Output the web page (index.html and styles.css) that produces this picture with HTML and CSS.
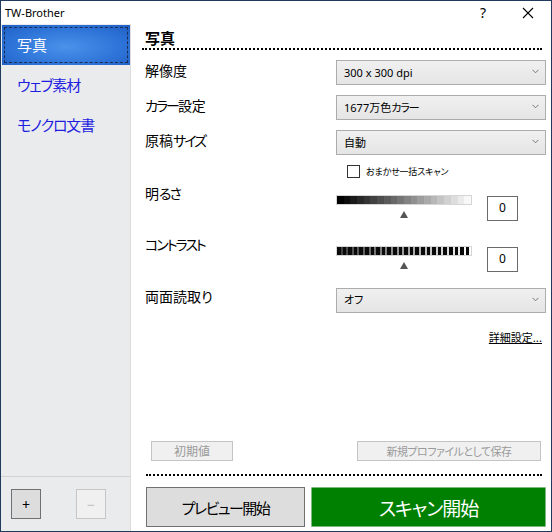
FILE: index.html
```html
<!DOCTYPE html>
<html lang="ja">
<head>
<meta charset="utf-8">
<title>TW-Brother</title>
<link rel="stylesheet" href="styles.css">
</head>
<body>
<div class="window">
  <div class="titlebar">
    <span class="title">TW-Brother</span>
    <span class="help">?</span>
    <span class="close"><svg width="12" height="12" viewBox="0 0 12 12"><path d="M1 1 L11 11 M11 1 L1 11" stroke="#000" stroke-width="1.1" fill="none"/></svg></span>
  </div>
  <div class="content">
    <aside class="sidebar">
      <ul class="profiles">
        <li class="profile selected"><span class="focus">写真</span></li>
        <li class="profile">ウェブ素材</li>
        <li class="profile">モノクロ文書</li>
      </ul>
      <div class="sidebar-tools">
        <button class="tool">+</button>
        <button class="tool disabled">−</button>
      </div>
    </aside>
    <main class="panel">
      <h1 class="heading">写真</h1>
      <div class="settings">
        <div class="row">
          <div class="label">解像度</div>
          <div class="select"><span>300 x 300 dpi</span><svg class="chev" width="7" height="5" viewBox="0 0 7 5"><path d="M0.5 0.8 L3.5 3.8 L6.5 0.8" stroke="#777" fill="none"/></svg></div>
        </div>
        <div class="row">
          <div class="label"><span class="kana">カラー</span>設定</div>
          <div class="select"><span>1677万色<span class="kana-s">カラー</span></span><svg class="chev" width="7" height="5" viewBox="0 0 7 5"><path d="M0.5 0.8 L3.5 3.8 L6.5 0.8" stroke="#777" fill="none"/></svg></div>
        </div>
        <div class="row">
          <div class="label">原稿<span class="kana">サイズ</span></div>
          <div class="select"><span>自動</span><svg class="chev" width="7" height="5" viewBox="0 0 7 5"><path d="M0.5 0.8 L3.5 3.8 L6.5 0.8" stroke="#777" fill="none"/></svg></div>
        </div>
        <div class="check-row">
          <span class="checkbox"></span><span class="check-label">おまかせ一括スキャン</span>
        </div>
        <div class="row slider-row bright">
          <div class="label">明<span class="kana">るさ</span></div>
          <div class="slider-ctrl">
            <div class="slider">
              <div class="bar bar-bright"></div>
              <div class="thumb"></div>
            </div>
            <div class="numbox">0</div>
          </div>
        </div>
        <div class="row slider-row contrast">
          <div class="label"><span class="kana">コントラスト</span></div>
          <div class="slider-ctrl">
            <div class="slider">
              <div class="bar bar-contrast"></div>
              <div class="thumb"></div>
            </div>
            <div class="numbox">0</div>
          </div>
        </div>
        <div class="row duplex">
          <div class="label">両面読取<span class="kana">り</span></div>
          <div class="select"><span>オフ</span><svg class="chev" width="7" height="5" viewBox="0 0 7 5"><path d="M0.5 0.8 L3.5 3.8 L6.5 0.8" stroke="#777" fill="none"/></svg></div>
        </div>
      </div>
      <div class="link-row"><a class="detail-link">詳細設定...</a></div>
      <div class="spacer"></div>
      <div class="profile-actions">
        <button class="btn-small default-btn">初期値</button>
        <button class="btn-small save-btn">新規プロファイルとして保存</button>
      </div>
      <div class="divider"></div>
      <div class="actions">
        <button class="btn-preview">プレビュー開始</button>
        <button class="btn-scan">スキャン開始</button>
      </div>
    </main>
  </div>
</div>
</body>
</html>
```

FILE: styles.css
```css
* { box-sizing: border-box; }
html, body { margin: 0; padding: 0; background: #fff; }
body {
  font-family: "Noto Sans", "Noto Sans CJK JP", sans-serif;
  font-feature-settings: "palt";
  color: #000;
}
button { font-feature-settings: "palt"; }
.window {
  width: 552px;
  height: 532px;
  border: 1px solid #1e3b5e;
  display: flex;
  flex-direction: column;
  background: #fff;
}
.titlebar {
  height: 23px;
  display: flex;
  align-items: center;
  background: #fff;
  font-size: 11px;
  line-height: 16px;
}
.title { padding-left: 4px; flex: 1; }
.help { width: 14px; margin-right: 28px; font-size: 14px; }
.close { width: 12px; height: 12px; margin-right: 17px; display: flex; }
.content {
  flex: 1;
  display: flex;
  min-height: 0;
}
.sidebar {
  width: 130px;
  background: #eaebed;
  border-right: 1px solid #dcdcdc;
  display: flex;
  flex-direction: column;
}
.profiles {
  list-style: none;
  margin: 0;
  padding: 1px 0 0 0;
  flex: 1;
  font-family: "Noto Sans CJK JP", sans-serif;
  font-size: 15px;
  letter-spacing: -1.2px;
}
.profile {
  height: 40px;
  line-height: 40px;
  padding-left: 16px;
  color: #1e1ee0;
}
.profile.selected {
  margin: 0 0 0 1px;
  width: 128px;
  padding: 2px;
  background: radial-gradient(ellipse at 50% 55%, #4a92ea 0%, #2e74d8 60%, #1f5fc4 100%);
  color: #fff;
  letter-spacing: 0;
}
.focus {
  display: block;
  height: 36px;
  line-height: 34px;
  border: 1px dashed #1a2d55;
  padding-left: 12px;
}
.sidebar-tools {
  height: 55px;
  border-top: 1px solid #d2d2d2;
  display: flex;
  align-items: flex-start;
  padding: 12px 0 0 10px;
  gap: 35px;
}
.tool {
  width: 30px;
  height: 30px;
  border: 1px solid #707070;
  background: #dddddd;
  font-family: "Noto Sans", sans-serif;
  font-size: 14px;
  padding: 0;
  color: #000;
}
.tool.disabled {
  border-color: #c6c6c6;
  background: #f0f0f0;
  color: #c0c0c0;
}
.panel {
  flex: 1;
  display: flex;
  flex-direction: column;
  padding: 0 5px 4px 11px;
  font-family: "Noto Sans", "Noto Sans CJK JP", sans-serif;
}
.heading {
  margin: 0 4px 0 0;
  padding: 4px 0 0 3px;
  height: 26px;
  font-size: 15px;
  line-height: 20px;
  font-weight: bold;
  font-family: "Noto Sans CJK JP", sans-serif;
  border-bottom: 2px dotted #000;
}
.settings {
  display: flex;
  flex-direction: column;
  padding-top: 10px;
}
.row {
  display: flex;
  align-items: center;
  margin-bottom: 10px;
}
.label {
  width: 194px;
  padding: 0 0 5px 3px;
  font-family: "Noto Sans CJK JP", sans-serif;
  font-size: 14px;
  line-height: 20px;
}
.kana { letter-spacing: -2px; }
.kana-s { letter-spacing: -1px; }
.slider-row .label { padding-bottom: 0; }
.duplex .label { padding-bottom: 8px; }
.select {
  flex: 1;
  height: 25px;
  border: 1px solid #acacac;
  background: linear-gradient(#f0f0f0, #e5e5e5);
  display: flex;
  align-items: center;
  justify-content: space-between;
  padding: 0 6px 0 7px;
  font-size: 11px;
}
.select span { line-height: 16px; }
.chev { margin-top: -2px; }
.check-row {
  display: flex;
  align-items: center;
  height: 13px;
  margin: 0 0 5px 205px;
}
.checkbox {
  width: 13px;
  height: 13px;
  border: 1px solid #333;
  background: #fff;
}
.check-label {
  margin-left: 6px;
  font-family: "Noto Sans CJK JP", sans-serif;
  font-size: 9px;
  letter-spacing: -0.2px;
  line-height: 13px;
}
.slider-row { align-items: flex-start; }
.slider-row.bright { margin-bottom: 14px; }
.slider-row.contrast { margin-bottom: 14px; }
.contrast .label { margin-top: -1px; }
.slider-ctrl {
  display: flex;
  align-items: flex-start;
}
.bright .slider-ctrl { padding-top: 12px; }
.contrast .slider-ctrl { padding-top: 11px; }
.slider {
  width: 136px;
  display: flex;
  flex-direction: column;
  align-items: center;
}
.bar {
  width: 136px;
  height: 10px;
  border: 1px solid #d6d6d6;
}
.bar-bright {
  background: linear-gradient(90deg,
    #000 0 5%, #0d0d0d 5% 10%, #1a1a1a 10% 15%, #272727 15% 20%,
    #343434 20% 25%, #414141 25% 30%, #4e4e4e 30% 35%, #5b5b5b 35% 40%,
    #686868 40% 45%, #757575 45% 50%, #838383 50% 55%, #909090 55% 60%,
    #9d9d9d 60% 65%, #aaaaaa 65% 70%, #b7b7b7 70% 75%, #c4c4c4 75% 80%,
    #d1d1d1 80% 85%, #dedede 85% 90%, #ebebeb 90% 95%, #f8f8f8 95% 100%);
}
.bar-contrast {
  background:
    repeating-linear-gradient(90deg, #0a0a0a 0 3.6px, transparent 3.6px 5.6px),
    linear-gradient(90deg, #3a3a3a, #ffffff);
}
.thumb {
  margin-top: 6px;
  width: 0;
  height: 0;
  border-left: 4px solid transparent;
  border-right: 4px solid transparent;
  border-bottom: 7px solid #555;
}
.numbox {
  margin: 1px 0 0 15px;
  width: 31px;
  height: 25px;
  border: 1px solid #6a6a6a;
  background: #fff;
  font-size: 12px;
  line-height: 22px;
  text-align: center;
}
.duplex { margin-bottom: 0; }
.link-row {
  display: flex;
  justify-content: flex-end;
  margin: 16px 4px 0 0;
}
.detail-link {
  font-family: "Noto Sans CJK JP", sans-serif;
  font-size: 11px;
  line-height: 14px;
  text-decoration: underline;
  color: #000;
}
.spacer { flex: 1; }
.profile-actions {
  display: flex;
  justify-content: space-between;
  height: 20px;
  padding: 0 5px 0 9px;
}
.btn-small {
  height: 20px;
  border: 1px solid #c4c4c4;
  background: #f0f0f0;
  color: #9a9a9a;
  font-family: "Noto Sans CJK JP", sans-serif;
  font-size: 12px;
  line-height: 16px;
  padding: 0;
}
.default-btn { width: 82px; }
.save-btn { width: 184px; font-size: 11px; letter-spacing: -0.5px; }
.divider {
  margin: 13px 4px 0 4px;
  border-top: 2px dotted #000;
}
.actions {
  display: flex;
  gap: 6px;
  margin-top: 11px;
  padding-left: 4px;
  height: 40px;
}
.btn-preview {
  width: 159px;
  height: 40px;
  border: 1px solid #707070;
  background: #dddddd;
  color: #000;
  font-family: "Noto Sans CJK JP", sans-serif;
  font-size: 15px;
  letter-spacing: -1.5px;
  padding: 0;
}
.btn-scan {
  flex: 1;
  height: 40px;
  border: 1px solid #7fb77f;
  background: #008000;
  color: #fff;
  font-family: "Noto Sans CJK JP", sans-serif;
  font-size: 19px;
  letter-spacing: -1px;
  padding: 0;
  border-radius: 1px;
}
```
